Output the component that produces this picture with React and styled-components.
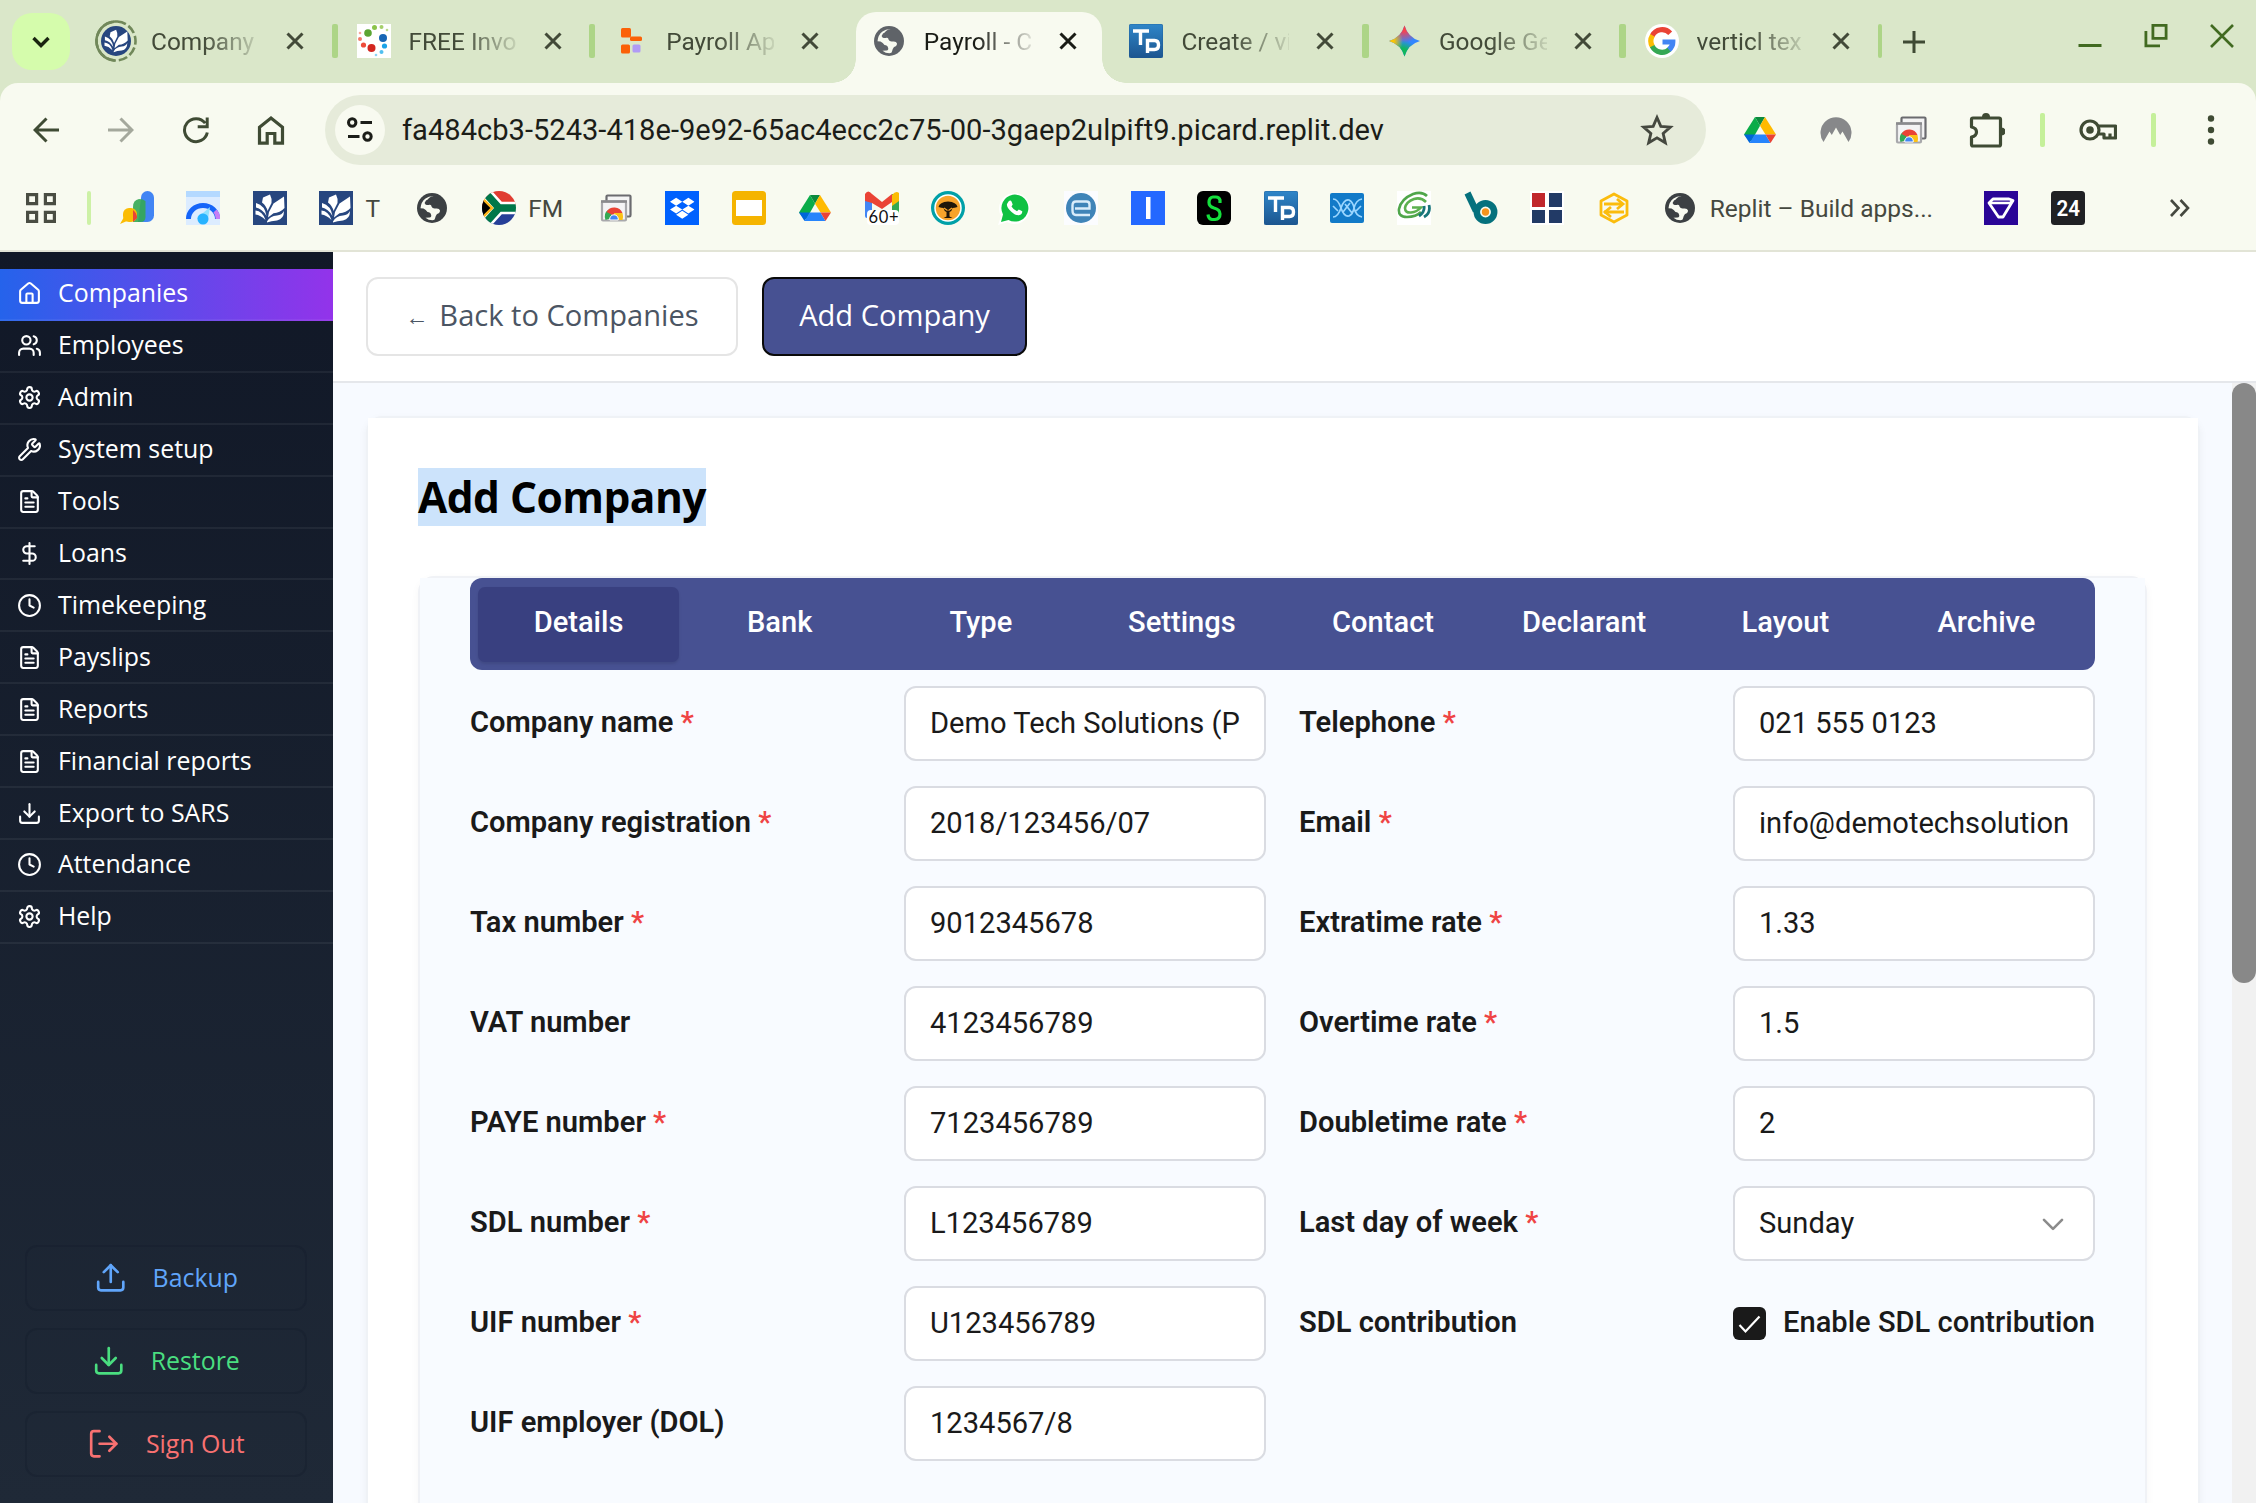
import React from "react";
import styled, { createGlobalStyle, css } from "styled-components";
import {
  House,
  Users,
  Wrench,
  FileText,
  DollarSign,
  Clock,
  Download,
  Upload,
  LogOut,
} from "lucide-react";
import { FaDropbox } from "react-icons/fa";

const GlobalStyle = createGlobalStyle`
  * { box-sizing: border-box; }
  body { margin: 0; overflow: hidden; background: #f8faf0; }
  button { font: inherit; border: 0; background: none; padding: 0; color: inherit; }
`;

const UI = `"Open Sans", "Noto Sans", sans-serif`;
const ROBOTO = `Roboto, "Liberation Sans", sans-serif`;

const Window = styled.div`
  width: 2256px;
  height: 1503px;
  display: flex;
  flex-direction: column;
  overflow: hidden;
  font-family: ${ROBOTO};
`;

/* ---------- tab strip ---------- */

const TabStrip = styled.div`
  height: 83px;
  flex: none;
  display: flex;
  background: #dae7c9;
  padding-left: 12px;
`;

const TabSearch = styled.button`
  width: 58px;
  height: 57px;
  margin: 13px 13px 0 0;
  border-radius: 20px;
  background: #d5fcac;
  display: grid;
  place-items: center;
`;

const Tab = styled.div`
  position: relative;
  width: 246px;
  height: 71px;
  margin-top: 12px;
  padding: 0 17px 13px 16px;
  flex: none;
  display: flex;
  align-items: center;
  color: #424a38;
  ${(p) =>
    p.$active &&
    css`
      background: #f8faf0;
      border-radius: 20px 20px 0 0;
      color: #1a1c16;
      &::before,
      &::after {
        content: "";
        position: absolute;
        bottom: 0;
        width: 24px;
        height: 24px;
      }
      &::before {
        right: 100%;
        background: radial-gradient(circle at 0 0, transparent 23.5px, #f8faf0 24px);
      }
      &::after {
        left: 100%;
        background: radial-gradient(circle at 100% 0, transparent 23.5px, #f8faf0 24px);
      }
    `}
`;

const Favicon = styled.span`
  width: 34px;
  height: 34px;
  flex: none;
  display: grid;
  place-items: center;
`;

const TabTitle = styled.span`
  width: 108px;
  margin: 0 19px 0 18px;
  padding-top: 1.5px;
  font-size: 24.4px;
  line-height: 32px;
  white-space: nowrap;
  overflow: hidden;
  mask-image: linear-gradient(90deg, #000 48%, rgba(0, 0, 0, 0.12) 100%);
`;

const TabClose = styled.button`
  width: 34px;
  height: 34px;
  display: grid;
  place-items: center;
`;

const TabGap = styled.div`
  width: 11.6px;
  height: 83px;
  flex: none;
  display: flex;
  justify-content: center;
  padding-top: 24px;
  &::after {
    content: "";
    width: ${(p) => p.$line || 0}px;
    height: 34px;
    border-radius: 2px;
    background: #add587;
  }
`;

const NewTab = styled.button`
  width: 56px;
  height: 83px;
  display: grid;
  place-items: center;
`;

const WindowControls = styled.div`
  margin-left: auto;
  padding-right: 1px;
  height: 72px;
  display: flex;
  color: #416a20;
  button {
    width: 66px;
    display: grid;
    place-items: center;
  }
`;

/* ---------- toolbar ---------- */

const ToolbarWrap = styled.div`
  height: 98px;
  flex: none;
  background: #dae7c9;
`;

const Toolbar = styled.div`
  height: 98px;
  background: #f8faf0;
  border-radius: 18px 18px 0 0;
  padding: 12px 0 0 8.5px;
  display: flex;
  align-items: flex-start;
  color: #3f4b34;
`;

const ToolButton = styled.button`
  width: ${(p) => p.$w || 75}px;
  height: 70px;
  flex: none;
  display: grid;
  place-items: center;
  color: ${(p) => (p.$dim ? "#a4a89c" : "inherit")};
`;

const ToolDivider = styled.div`
  width: ${(p) => p.$w}px;
  height: 70px;
  display: grid;
  place-items: center;
  &::after {
    content: "";
    width: 5px;
    height: 34px;
    border-radius: 2px;
    background: #c5f09a;
  }
`;

const Omnibox = styled.div`
  width: 1381px;
  height: 70px;
  margin: 0 16.5px;
  padding: 0 31px 0 10px;
  border-radius: 35px;
  background: #e6ebda;
  display: flex;
  align-items: center;
`;

const SiteInfo = styled.span`
  width: 50px;
  height: 50px;
  border-radius: 25px;
  background: #f8faf0;
  display: grid;
  place-items: center;
`;

const Url = styled.span`
  flex: 1;
  margin-left: 17px;
  font-size: 29.1px;
  color: #1b1d18;
  white-space: nowrap;
`;

/* ---------- bookmarks ---------- */

const Bookmarks = styled.div`
  height: 71px;
  flex: none;
  padding: 10px 0 0 20px;
  display: flex;
  align-items: flex-start;
  background: #f8faf0;
  border-bottom: 2px solid #e2e4d6;
  color: #45483f;
  font-size: 24.5px;
`;

const Bookmark = styled.div`
  width: ${(p) => p.$w || 66.54}px;
  height: 34px;
  flex: none;
  display: flex;
  align-items: center;
  gap: 12.5px;
  white-space: nowrap;
  svg { flex: none; }
`;

const BookmarkDivider = styled.div`
  width: 4px;
  height: 34px;
  margin: 0 28.5px 0 25px;
  border-radius: 2px;
  background: #cdf1a6;
`;

/* ---------- application ---------- */

const AppBody = styled.div`
  flex: 1;
  min-height: 0;
  display: flex;
`;

const Sidebar = styled.aside`
  width: 333px;
  flex: none;
  display: flex;
  flex-direction: column;
  padding-top: 17px;
  background: linear-gradient(180deg, #111827 0%, #1f2937 100%);
  color: #fff;
  font-family: ${UI};
  font-size: 24.9px;
`;

const NavItem = styled.a`
  height: 51.92px;
  padding-left: 17px;
  display: flex;
  align-items: center;
  gap: 16px;
  white-space: nowrap;
  border-bottom: 2px solid rgba(255, 255, 255, 0.06);
  background: ${(p) => (p.$active ? "linear-gradient(90deg, #2563eb, #9333ea)" : "none")};
  svg { flex: none; }
  span { padding-bottom: 3px; }
`;

const SidebarFooter = styled.div`
  margin-top: auto;
  padding: 0 26px 26px 25px;
  display: flex;
  flex-direction: column;
  gap: 17px;
`;

const FooterButton = styled.button`
  height: 66px;
  border: 2px solid rgba(17, 24, 39, 0.25);
  border-radius: 12px;
  display: flex;
  align-items: center;
  justify-content: center;
  gap: 25px;
  color: ${(p) => p.$tone};
  span { padding-bottom: 3px; }
`;

const Main = styled.main`
  flex: 1;
  min-width: 0;
  display: flex;
  flex-direction: column;
`;

const ActionBar = styled.div`
  height: 131px;
  flex: none;
  padding: 25px 0 0 33px;
  display: flex;
  gap: 24px;
  background: #fff;
  border-bottom: 2px solid #e5e7eb;
  font-family: ${UI};
  font-size: 29.1px;
  font-weight: 500;
`;

const ActionButton = styled.button`
  width: ${(p) => p.$w}px;
  height: 79px;
  padding-bottom: 3px;
  border-radius: 12px;
  border: 2px solid ${(p) => (p.$primary ? "#0a0a0a" : "#e5e5e5")};
  background: ${(p) => (p.$primary ? "#475192" : "#fff")};
  color: ${(p) => (p.$primary ? "#fff" : "#4b5563")};
  display: flex;
  align-items: center;
  justify-content: center;
  gap: 11px;
  white-space: nowrap;
`;

const BackArrow = styled.span`
  padding-top: 4px;
  font-family: "Liberation Sans", sans-serif;
  font-size: 23px;
`;

const Scroller = styled.div`
  flex: 1;
  min-height: 0;
  display: flex;
  background: #f7faff;
`;

const Canvas = styled.div`
  flex: 1;
  padding: 33px 32px 0 33px;
`;

const Frame = styled.section`
  height: 1200px;
  border: 2px solid #eff2f6;
  border-radius: 16px;
  box-shadow: 0 3px 8px rgba(0, 0, 0, 0.05);
`;

const Page = styled.div`
  height: 100%;
  padding: 50px 51px 0 50px;
  background: #fff;
`;

const Title = styled.h1`
  margin: 0 0 50px;
  font-family: ${UI};
  font-size: 42.5px;
  line-height: 58px;
  font-weight: 700;
  letter-spacing: -0.55px;
  color: #000;
  span {
    display: inline-block;
    margin-top: -1px;
    background: #cce3fb;
  }
`;

const Panel = styled.div`
  height: 1000px;
  border: 2px solid #f0f2f6;
  border-radius: 16px;
  box-shadow: 0 3px 8px rgba(0, 0, 0, 0.04);
`;

const PanelBody = styled.div`
  height: 100%;
  padding: 0 50px;
  background: #f8fbff;
`;

const FormTabs = styled.nav`
  height: 92px;
  padding: 8.5px 8px;
  display: grid;
  grid-template-columns: repeat(8, 1fr);
  border-radius: 12px;
  background: #475192;
`;

const FormTab = styled.button`
  padding-bottom: 5px;
  border-radius: 7px;
  font-size: 29.1px;
  font-weight: 500;
  color: #fff;
  background: ${(p) => (p.$active ? "#394080" : "none")};
  box-shadow: ${(p) => (p.$active ? "0 2px 3px rgba(0, 0, 0, 0.1)" : "none")};
`;

const Form = styled.div`
  display: grid;
  grid-template-columns: 1fr 1fr;
  column-gap: 33px;
  padding-top: 16px;
`;

const Column = styled.div`
  display: flex;
  flex-direction: column;
  gap: 25px;
`;

const Field = styled.div`
  height: 75px;
  display: grid;
  grid-template-columns: 1fr 362px;
  align-items: center;
`;

const Label = styled.label`
  padding-bottom: 4px;
  font-size: 29.1px;
  font-weight: 600;
  color: #1a1a1a;
  white-space: nowrap;
  i {
    font-style: normal;
    color: #ef4444;
  }
`;

const Control = styled.div`
  height: 75px;
  padding: 0 24px 2px;
  display: flex;
  align-items: center;
  justify-content: space-between;
  border: 2px solid #dadce2;
  border-radius: 12px;
  background: #fff;
  color: #1a1a1a;
  font-size: 29.1px;
  white-space: nowrap;
  overflow: hidden;
  svg { margin: 3px 5px 0 0; }
`;

const CheckRow = styled.div`
  display: flex;
  align-items: center;
  gap: 17px;
  font-size: 29.1px;
  font-weight: 500;
  color: #1a1a1a;
  white-space: nowrap;
  span { padding-bottom: 4px; }
`;

const CheckBox = styled.div`
  width: 33px;
  height: 33px;
  flex: none;
  border-radius: 6px;
  background: #1a1a1a;
  display: grid;
  place-items: center;
`;

const ScrollTrack = styled.div`
  width: 24px;
  background: #f1f1f1;
`;

const ScrollThumb = styled.div`
  height: 600px;
  border-radius: 12px;
  background: #888;
`;

/* ---------- drawings ---------- */

const Svg = ({ s = 34, vb = 34, children, ...rest }) => (
  <svg width={s} height={s} viewBox={`0 0 ${vb} ${vb}`} fill="none" {...rest}>
    {children}
  </svg>
);

const Gear = () => (
  <svg width="25" height="25" viewBox="0 0 24 24" fill="none" stroke="currentColor" strokeWidth="2" strokeLinecap="round" strokeLinejoin="round">
    <path d="M12.22 2h-.44a2 2 0 0 0-2 2v.18a2 2 0 0 1-1 1.73l-.43.25a2 2 0 0 1-2 0l-.15-.08a2 2 0 0 0-2.73.73l-.22.38a2 2 0 0 0 .73 2.73l.15.1a2 2 0 0 1 1 1.72v.51a2 2 0 0 1-1 1.74l-.15.09a2 2 0 0 0-.73 2.73l.22.38a2 2 0 0 0 2.73.73l.15-.08a2 2 0 0 1 2 0l.43.25a2 2 0 0 1 1 1.73V20a2 2 0 0 0 2 2h.44a2 2 0 0 0 2-2v-.18a2 2 0 0 1 1-1.73l.43-.25a2 2 0 0 1 2 0l.15.08a2 2 0 0 0 2.73-.73l.22-.39a2 2 0 0 0-.73-2.73l-.15-.08a2 2 0 0 1-1-1.74v-.5a2 2 0 0 1 1-1.74l.15-.09a2 2 0 0 0 .73-2.73l-.22-.38a2 2 0 0 0-2.73-.73l-.15.08a2 2 0 0 1-2 0l-.43-.25a2 2 0 0 1-1-1.73V4a2 2 0 0 0-2-2z" />
    <circle cx="12" cy="12" r="3" />
  </svg>
);

const CloseX = () => (
  <Svg s={18} vb={18} stroke="currentColor" strokeWidth="3">
    <path d="M1.5 1.5l15 15M16.5 1.5l-15 15" />
  </Svg>
);

const Leaves = () => (
  <g fill="#fff">
    <path d="M10 6.500L17 3.500Q19.300 8 18.500 12L14.500 20Q13.500 15 9 11.500z" />
    <path d="M16 21L20.500 12.500 31 5.500 31.500 17Q27 22 20.500 22.300L15 26.500z" />
    <path d="M3 12Q12 14.500 13.500 25 9 17.500 3 16.500z" />
    <path d="M2.500 19.500Q9.500 20 12.500 29 7.500 24 2.500 23.500z" />
    <path d="M14 30.500Q17 25 24 24.500 29 24 31 20 31 28 24 29.500 18 30 14 31.500z" />
  </g>
);

const BookIcon = () => (
  <Svg>
    <rect width="34" height="34" fill="#27467f" />
    <Leaves />
  </Svg>
);

const LoadingBook = () => (
  <Svg s={42} vb={42} style={{ margin: -4 }}>
    <circle cx="21" cy="21" r="19.500" stroke="#71885a" strokeWidth="2.600" strokeDasharray="9 3" pathLength="122.5" transform="rotate(-86 21 21)" />
    <path d="M19 1.600A19.500 19.500 0 0 0 19 40.400" stroke="#71885a" strokeWidth="2.600" strokeLinecap="round" />
    <circle cx="21" cy="21" r="15" fill="#27467f" />
    <g transform="translate(7.500 7) scale(.8)"><Leaves /></g>
  </Svg>
);

const DotsIcon = () => (
  <Svg>
    <rect width="34" height="34" fill="#fff" />
    <circle cx="11" cy="9" r="3.800" fill="#5ba533" />
    <circle cx="26" cy="14" r="4" fill="#1766b5" />
    <circle cx="14.500" cy="24" r="4" fill="#d3261f" />
    <circle cx="17.500" cy="3.500" r="2.500" fill="#8bc34a" />
    <circle cx="24.500" cy="3" r="2" fill="#a5cf6b" />
    <circle cx="30" cy="6" r="1.300" fill="#b9d98b" />
    <circle cx="27.500" cy="22" r="2.600" fill="#1ba3e8" />
    <circle cx="24.500" cy="28" r="2" fill="#50bff0" />
    <circle cx="19" cy="31" r="1.300" fill="#8bd4f5" />
    <circle cx="6.500" cy="21" r="2.600" fill="#ee4b3a" />
    <circle cx="3" cy="15" r="2" fill="#f47a68" />
    <circle cx="3" cy="9" r="1.300" fill="#f8a89b" />
  </Svg>
);

const ReplitIcon = () => (
  <Svg>
    <rect x="7" y="4" width="10" height="9.500" rx="1.500" fill="#fb6107" />
    <rect x="16" y="12.500" width="12" height="4.500" rx="1.500" fill="#fb6107" />
    <rect x="7" y="20.500" width="9" height="9" rx="1.500" fill="#fb6107" />
    <rect x="18.500" y="20.500" width="8" height="8" rx="1.500" fill="#b09bf5" />
  </Svg>
);

const GlobeIcon = ({ color = "#3c4043" }) => (
  <Svg>
    <circle cx="17" cy="17" r="15" fill={color} />
    <path d="M18.500 5q-3 .5-4.500 2-1 1.500-3 2.500-2 2-.5 4 2 1 4 .3 2-.3 2 1.700 1 2.500 4 2 4-.5 4.500 2 0 2.500-3 3.500-1.500 1.500-2 4.500 0 1.800-2.500 1.800-4 0-7-2.500l4-.3q2.500-.5 1.500-3-.5-2.500-3.500-2.500-1.500-2.500-4-3.500l-3-.2q.5-6.500 5-9.800 3.500-2.700 8-2.500z" fill="#f8faf0" />
  </Svg>
);

const TpIcon = () => (
  <Svg>
    <defs>
      <linearGradient id="tp" x1="0" y1="0" x2="0" y2="1">
        <stop stopColor="#2f86c9" />
        <stop offset="1" stopColor="#1c558f" />
      </linearGradient>
    </defs>
    <rect width="34" height="34" rx="2.500" fill="url(#tp)" stroke="#1d5c96" strokeWidth=".6" />
    <path d="M4 7h16M11.500 7v14M18.500 29V16.500h7q4 0 4 4.500t-4 4.500h-6" stroke="#fff" strokeWidth="3.400" />
  </Svg>
);

const GeminiIcon = () => (
  <Svg>
    <defs>
      <radialGradient id="gr" cx="17" cy="2" r="17" gradientUnits="userSpaceOnUse"><stop stopColor="#f8423f" /><stop offset=".3" stopColor="#f8424f" /><stop offset="1" stopColor="#f8424f" stopOpacity="0" /></radialGradient>
      <radialGradient id="gy" cx="1" cy="17" r="15" gradientUnits="userSpaceOnUse"><stop stopColor="#fcc502" /><stop offset=".4" stopColor="#fcc502" /><stop offset="1" stopColor="#fcc502" stopOpacity="0" /></radialGradient>
      <radialGradient id="gg" cx="15" cy="33" r="17" gradientUnits="userSpaceOnUse"><stop stopColor="#10b75b" /><stop offset=".5" stopColor="#10b75b" /><stop offset="1" stopColor="#10b75b" stopOpacity="0" /></radialGradient>
    </defs>
    {["#3186ff", "url(#gr)", "url(#gg)", "url(#gy)"].map((f) => (
      <path key={f} d="M17.500 1.500q3.300 12 15.500 15.500-12.200 3.500-15.500 15.500Q14.200 20.500 2 17 14.200 13.500 17.500 1.500z" fill={f} />
    ))}
  </Svg>
);

const GoogleIcon = () => (
  <Svg>
    <circle cx="17" cy="17" r="17" fill="#fff" />
    <g strokeWidth="5.200">
      <path d="M25.200 9.200A11 11 0 0 0 7.200 11.800" stroke="#ea4335" />
      <path d="M7.500 11.300a11 11 0 0 0 0 11.400" stroke="#fbbc04" />
      <path d="M7.200 22.200a11 11 0 0 0 17.300 3.200" stroke="#34a853" />
      <path d="M24 25.800q3.800-3.300 3.800-7.800H17.500" stroke="#4285f4" />
    </g>
  </Svg>
);

const DriveIcon = () => (
  <Svg>
    <path d="M12 4h10l-5 8.700z" fill="#0c8a3e" />
    <path d="M12 4l5 8.700-8.500 15.300h-2L1 21.500z" fill="#0aac49" />
    <path d="M22 4l11 17.500H22.500L17 12.700z" fill="#ffba00" />
    <path d="M11.500 21.500h11l5 8.500h-21z" fill="#2684fc" />
    <path d="M1 21.500h10.500L6.500 30z" fill="#0066da" />
    <path d="M22.500 21.500H33L27.500 30z" fill="#ea4335" />
  </Svg>
);

const ChromeWindows = () => (
  <Svg>
    <path d="M7.500 10V5.500q0-1 1-1h22q1 0 1 1V24q0 1.500-1 1.500h-3" stroke="#6b6b6f" strokeWidth="2.200" fill="#f4f4f4" />
    <rect x="3" y="10.500" width="24" height="19" rx="1" fill="#f4f4f5" stroke="#a8a8ab" strokeWidth="2.200" />
    <path d="M2 10.500h26" stroke="#8a8a8d" strokeWidth="2.600" />
    <path d="M6.500 29a9 9 0 0 1 3-10.500l5 8z" fill="#34a853" />
    <path d="M7.500 21a9 9 0 0 1 16 1l-9 2.500z" fill="#ea4335" />
    <path d="M15 22h8.500q1 3.500 0 7H15z" fill="#fbc116" />
    <path d="M10.800 29a4.300 4.300 0 1 1 8.400 0z" fill="#4285f4" stroke="#fff" strokeWidth="1" />
  </Svg>
);

const AdsIcon = () => (
  <Svg>
    <rect x="21" y="0" width="13" height="31" rx="6.500" fill="#4285f4" />
    <path d="M21 7l-3 24h9z" fill="#4285f4" />
    <path d="M13 31V16q0-7 6-8 4 0 6.500 2v16q0 5-5 5z" fill="#34a853" opacity=".9" />
    <rect x="3" y="17" width="14" height="14" rx="6" fill="#fbbc04" />
    <path d="M13 19q4 3 4 8l-4 4z" fill="#ea4335" />
    <path d="M0 33l4-7 3 4z" fill="#fbbc04" />
  </Svg>
);

const WifiIcon = () => (
  <Svg>
    <rect width="34" height="34" fill="#dcecff" />
    <rect width="34" height="6" fill="#b4d9ff" />
    <path d="M2.500 28A14.500 13.500 0 0 1 31.500 28" stroke="#1565f9" strokeWidth="5" />
    <path d="M29 20q3 3 3 8" stroke="#c77df5" strokeWidth="4.500" />
    <path d="M11 28q1-5 6-6l7-6-2 12z" fill="#8fe1ff" />
    <circle cx="17" cy="28" r="5.500" fill="#27b3ff" />
  </Svg>
);

const FlagIcon = () => (
  <Svg>
    <defs><clipPath id="flag"><circle cx="17" cy="17" r="17" /></clipPath></defs>
    <g clipPath="url(#flag)">
      <rect width="34" height="17" fill="#e03c31" />
      <rect y="17" width="34" height="17" fill="#263f98" />
      <path d="M-2-4l19 21h20M-2 38l19-21" stroke="#fff" strokeWidth="12.500" />
      <path d="M-2-4l19 21h20M-2 38l19-21" stroke="#007749" strokeWidth="7.500" />
      <path d="M-2 5l12 12-12 12z" fill="#000" stroke="#ffb81c" strokeWidth="2.400" />
    </g>
  </Svg>
);

const DropboxIcon = () => (
  <Svg>
    <rect width="34" height="34" fill="#0061fe" />
    <FaDropbox x="5" y="5" width="24" height="24" color="#fff" />
  </Svg>
);

const SlidesIcon = () => (
  <Svg>
    <rect y="0" width="34" height="34" rx="3.500" fill="#f5b400" />
    <rect x="4" y="9" width="26" height="16" fill="#fff" />
  </Svg>
);

const GmailIcon = () => (
  <Svg>
    <path d="M0 3h7v24H2q-2 0-2-2z" fill="#4285f4" />
    <path d="M27 3h7v22q0 2-2 2h-5z" fill="#34a853" />
    <path d="M27 4q4-5 7-2v8l-7 5z" fill="#fbbc04" />
    <path d="M0 10V3q3-5 7 0l10 8 10-8v8L17 18 7 12z" fill="#ea4335" />
    <rect x="2" y="19" width="32" height="15" rx="4" fill="#fff" />
    <text x="3.500" y="32" fontFamily="Lato, sans-serif" fontSize="16.500" textLength="30" fill="#111">60+</text>
  </Svg>
);

const TreeIcon = () => (
  <Svg>
    <circle cx="17" cy="17" r="17" fill="#00a0a8" />
    <circle cx="17" cy="17" r="13" fill="#f7a32b" stroke="#fff" strokeWidth="1.500" />
    <path d="M7.500 16q1-5 9.500-5.500 8.500.5 9.500 5.500-3 1-5 1-.5 3-3 4v4.500l3 1.500h-9l3-1.500V21q-2.500-1-3-4-2 0-5-1z" fill="#20160a" />
    <path d="M13 17l3.500 2.500M21 17l-3.500 2.500" stroke="#f7a32b" strokeWidth="1.200" />
  </Svg>
);

const WhatsIcon = () => (
  <Svg>
    <path d="M0 34l3-9A15.500 15.500 0 1 1 9 31z" fill="#fff" />
    <path d="M3 31l2-7.500A13.500 13.500 0 1 1 10.500 29z" fill="#0fc143" />
    <path d="M10.500 10.500q2-2 3 0l1.200 3-1.200 2q2 3.500 5.500 4.700l1.800-1.700 3.500 1.700q0 3.500-3.500 4-3 .5-7.500-3.500-5-4.500-4.300-7.700z" fill="#fff" />
  </Svg>
);

const EIcon = () => (
  <Svg>
    <rect width="34" height="34" fill="#fbfcff" />
    <circle cx="17" cy="17" r="15" fill="#3f84b8" />
    <path d="M11 17.500h14.500V13.500q0-3-3-3H12q-3.500 0-3.500 4v5q0 4.500 3.500 4.500h14" stroke="#d9ecfa" strokeWidth="2.400" />
  </Svg>
);

const BarIcon = () => (
  <Svg>
    <rect width="34" height="34" fill="#2468ff" />
    <rect x="15" y="6" width="4.500" height="22" fill="#fff" />
  </Svg>
);

const SIcon = () => (
  <Svg>
    <rect width="34" height="34" rx="6" fill="#000" />
    <path d="M23 12V9q-1-3-4-3h-3q-4 .5-4 5.500 0 4 5 5.500 6 1.500 6 6 0 5-5 5.500h-3q-3.500-.5-4-5" stroke="#14e03c" strokeWidth="3.200" />
  </Svg>
);

const DnaIcon = () => (
  <Svg>
    <rect y="2" width="34" height="30" rx="2" fill="#127ac8" />
    <path d="M3 8q5 0 8 9 3 9 8 8 4-2 5-8 2-8 8-9M3 26q5 0 8-9 3-9 8-8 4 2 5 8 2 8 8 9M15 13l7 9M20 12l-7 9M3 15l5 5M31 15l-5 5" stroke="#9bd6ff" strokeWidth="1.700" />
  </Svg>
);

const SwirlIcon = () => (
  <Svg>
    <rect width="34" height="34" fill="#fff" />
    <path d="M30 5Q25 0 16 3 4 8 2 18 1 26 10 26q9 0 14-5" stroke="#4fa64a" strokeWidth="2.600" />
    <path d="M29 11Q24 6 17 8 9 11 8 17q0 5 6 4.500 6-.5 10-5H15" stroke="#5cb04f" strokeWidth="2.600" />
    <path d="M27 15q1 6-5 10M32 14q2 8-5 12" stroke="#18757a" strokeWidth="2.800" />
  </Svg>
);

const BIcon = () => (
  <Svg>
    <circle cx="21.500" cy="21" r="8.700" stroke="#05717d" strokeWidth="6.500" />
    <path d="M3.500 2l8.500 18" stroke="#05717d" strokeWidth="6.500" />
    <circle cx="21.500" cy="21" r="3.700" fill="#f7941d" />
  </Svg>
);

const SquaresIcon = () => (
  <Svg>
    <rect width="34" height="34" fill="#fff" />
    <rect x="2" y="2" width="13" height="14" fill="#c1272d" />
    <rect x="19" y="2" width="13" height="14" fill="#223a66" />
    <rect x="2" y="19" width="13" height="13" fill="#223a66" />
    <rect x="19" y="19" width="13" height="13" fill="#223a66" />
  </Svg>
);

const HexIcon = () => (
  <Svg stroke="#fbbc0d">
    <path d="M17 3l13 7v14l-13 7-13-7V10z" strokeWidth="2.800" strokeLinejoin="round" />
    <path d="M7 13h18M7 21h20" strokeWidth="3" />
    <path d="M20 8l6 5-6 5M14 16l-6 5 6 5" strokeWidth="2.800" />
  </Svg>
);

const TriIcon = () => (
  <Svg>
    <rect width="34" height="34" fill="#2a0597" />
    <path d="M5 12l4-4h16l4 1.500L19 26h-4.500z" stroke="#fff" strokeWidth="2.800" strokeLinejoin="round" />
    <path d="M5 12l21 0 3-2.500" stroke="#fff" strokeWidth="2.600" />
  </Svg>
);

const TwentyFourIcon = () => (
  <Svg>
    <rect width="34" height="34" rx="3.500" fill="#202124" />
    <text x="5.500" y="25" fontFamily="Roboto, sans-serif" fontWeight="600" fontSize="22" textLength="23.500" fill="#fff" lengthAdjust="spacingAndGlyphs">24</text>
  </Svg>
);

const NordIcon = () => (
  <Svg>
    <path d="M4.500 29A15.500 15.500 0 1 1 29.500 29l-6-10.500-2.300 3.500L17 14.500 12.800 22l-2.300-3.500z" fill="#87888a" />
  </Svg>
);

/* ---------- data ---------- */

const tabs = [
  { title: "Company", icon: <LoadingBook />, line: 6 },
  { title: "FREE Invo", icon: <DotsIcon />, line: 6 },
  { title: "Payroll Ap", icon: <ReplitIcon />, line: 0 },
  { title: "Payroll - C", icon: <GlobeIcon color="#5f6368" />, line: 0, active: true },
  { title: "Create / vi", icon: <TpIcon />, line: 7 },
  { title: "Google Ge", icon: <GeminiIcon />, line: 7 },
  { title: "verticl tex", icon: <GoogleIcon />, line: 4 },
];

const bookmarks = [
  [<AdsIcon />],
  [<WifiIcon />],
  [<BookIcon />],
  [<BookIcon />, "T", 96],
  [<GlobeIcon />],
  [<FlagIcon />, "FM", 117],
  [<ChromeWindows />],
  [<DropboxIcon />],
  [<SlidesIcon />],
  [<DriveIcon />],
  [<GmailIcon />],
  [<TreeIcon />],
  [<WhatsIcon />],
  [<EIcon />],
  [<BarIcon />],
  [<SIcon />],
  [<TpIcon />],
  [<DnaIcon />],
  [<SwirlIcon />],
  [<BIcon />],
  [<SquaresIcon />],
  [<HexIcon />],
  [<GlobeIcon />, "Replit – Build apps...", 321],
  [<TriIcon />],
  [<TwentyFourIcon />, null, 112],
];

const nav = [
  ["Companies", House],
  ["Employees", Users],
  ["Admin", Gear],
  ["System setup", Wrench],
  ["Tools", FileText],
  ["Loans", DollarSign],
  ["Timekeeping", Clock],
  ["Payslips", FileText],
  ["Reports", FileText],
  ["Financial reports", FileText],
  ["Export to SARS", Download],
  ["Attendance", Clock],
  ["Help", Gear],
];

const footer = [
  ["Backup", Upload, "#60a5fa"],
  ["Restore", Download, "#4ade80"],
  ["Sign Out", LogOut, "#f87171"],
];

const formTabs = ["Details", "Bank", "Type", "Settings", "Contact", "Declarant", "Layout", "Archive"];

const left = [
  ["Company name", true, "Demo Tech Solutions (P"],
  ["Company registration", true, "2018/123456/07"],
  ["Tax number", true, "9012345678"],
  ["VAT number", false, "4123456789"],
  ["PAYE number", true, "7123456789"],
  ["SDL number", true, "L123456789"],
  ["UIF number", true, "U123456789"],
  ["UIF employer (DOL)", false, "1234567/8"],
];

const right = [
  ["Telephone", true, "021 555 0123"],
  ["Email", true, "info@demotechsolution"],
  ["Extratime rate", true, "1.33"],
  ["Overtime rate", true, "1.5"],
  ["Doubletime rate", true, "2"],
  ["Last day of week", true, "Sunday", "select"],
  ["SDL contribution", false, "Enable SDL contribution", "check"],
];

const FieldRow = ({ label, required, value, kind }) => (
  <Field>
    <Label>
      {label} {required && <i>*</i>}
    </Label>
    {kind === "check" ? (
      <CheckRow>
        <CheckBox>
          <Svg s={23} vb={23} stroke="#fff" strokeWidth="2.200">
            <path d="M1.500 13l6 6.500L21.500 4.500" />
          </Svg>
        </CheckBox>
        <span>{value}</span>
      </CheckRow>
    ) : (
      <Control>
        <span>{value}</span>
        {kind === "select" && (
          <svg width="22" height="13" viewBox="0 0 22 13" fill="none" stroke="#8b8b8b" strokeWidth="2.600" strokeLinecap="round" strokeLinejoin="round">
            <path d="M2 1.800l9 9 9-9" />
          </svg>
        )}
      </Control>
    )}
  </Field>
);

export default function App() {
  return (
    <Window>
      <GlobalStyle />
      <TabStrip>
        <TabSearch>
          <Svg s={20} vb={20} stroke="#1a2410" strokeWidth="3.400">
            <path d="M2.500 6l7.500 7.500L17.500 6" />
          </Svg>
        </TabSearch>
        {tabs.map((t) => (
          <React.Fragment key={t.title}>
            <Tab $active={t.active}>
              <Favicon>{t.icon}</Favicon>
              <TabTitle>{t.title}</TabTitle>
              <TabClose><CloseX /></TabClose>
            </Tab>
            <TabGap $line={t.line} />
          </React.Fragment>
        ))}
        <NewTab>
          <Svg s={22} vb={22} stroke="#3f4b34" strokeWidth="3"><path d="M11 0v22M0 11h22" /></Svg>
        </NewTab>
        <WindowControls>
          <button><Svg s={24} vb={24} stroke="currentColor" strokeWidth="3"><path d="M.5 21.500h23" /></Svg></button>
          <button>
            <Svg s={24} vb={24} stroke="currentColor" strokeWidth="2.800">
              <path d="M8.900 1.400h13.200v13H8.900zM1.900 7v14.900H16" />
            </Svg>
          </button>
          <button><Svg s={24} vb={24} stroke="currentColor" strokeWidth="2.600"><path d="M1 1l22 22M23 1L1 23" /></Svg></button>
        </WindowControls>
      </TabStrip>

      <ToolbarWrap>
        <Toolbar>
          <ToolButton>
            <Svg s={26} vb={26} stroke="currentColor" strokeWidth="3"><path d="M26 13H2.500M13.500 1.500L2 13l11.500 11.500" /></Svg>
          </ToolButton>
          <ToolButton $dim>
            <Svg s={26} vb={26} stroke="currentColor" strokeWidth="3"><path d="M0 13h23.500M12.500 1.500L24 13 12.500 24.500" /></Svg>
          </ToolButton>
          <ToolButton>
            <Svg s={28} vb={28} stroke="currentColor" strokeWidth="3">
              <path d="M23.200 7.200A11.500 11.500 0 1 0 25.300 16.500M25.200 1.500v9.200h-9.500" />
            </Svg>
          </ToolButton>
          <ToolButton>
            <Svg s={30} vb={30} stroke="currentColor" strokeWidth="3.200">
              <path d="M3.500 12.200L15 3l11.500 9.200V28.200h-7.700V18.500h-7.600v9.700H3.500z" />
            </Svg>
          </ToolButton>
          <Omnibox>
            <SiteInfo>
              <Svg s={26} vb={26} stroke="#1b1d18" strokeWidth="3">
                <circle cx="5.200" cy="5.500" r="3.700" /><path d="M13.500 5.500H25M1 19.500h11.500" /><circle cx="20.500" cy="19.500" r="3.700" />
              </Svg>
            </SiteInfo>
            <Url>fa484cb3-5243-418e-9e92-65ac4ecc2c75-00-3gaep2ulpift9.picard.replit.dev</Url>
            <Svg s={36} vb={24} stroke="#45483f" strokeWidth="1.900">
              <path d="M12 3.700l2.550 5.850 6.350.55-4.800 4.200 1.450 6.200L12 17.200l-5.550 3.300 1.450-6.200-4.800-4.200 6.350-.55z" />
            </Svg>
          </Omnibox>
          <ToolButton $w={75.5}><DriveIcon /></ToolButton>
          <ToolButton $w={75.5}><NordIcon /></ToolButton>
          <ToolButton $w={75.5}><ChromeWindows /></ToolButton>
          <ToolButton $w={75.5}>
            <Svg s={36} vb={36} stroke="currentColor" strokeWidth="3.200" strokeLinejoin="round">
              <path d="M4 6h26q1.500 0 1.500 1.500v25q0 1.500-1.500 1.500H4q-1.500 0-1.500-1.500V25q5-1 5-5t-5-5V7.500Q2.500 6 4 6z" />
              <path d="M13 5a4 4 0 0 1 8 0zM32.500 15.500a4 4 0 0 1 0 8z" fill="currentColor" stroke="none" />
            </Svg>
          </ToolButton>
          <ToolDivider $w={35} />
          <ToolButton $w={77}>
            <Svg s={38} vb={38} stroke="currentColor" strokeWidth="3.200" strokeLinejoin="round">
              <path d="M19 15h17.500v12h-6M19 23h6v4h6v-4.500" />
              <circle cx="11" cy="19" r="9" />
              <circle cx="11" cy="19" r="3.800" fill="currentColor" stroke="none" />
            </Svg>
          </ToolButton>
          <ToolDivider $w={34} />
          <ToolButton $w={81}>
            <Svg s={34} vb={34}>
              <circle cx="17" cy="5.500" r="3.200" fill="currentColor" /><circle cx="17" cy="17" r="3.200" fill="currentColor" /><circle cx="17" cy="28.500" r="3.200" fill="currentColor" />
            </Svg>
          </ToolButton>
        </Toolbar>
      </ToolbarWrap>

      <Bookmarks>
        <svg width="42" height="34" viewBox="0 4 42 34" fill="none" stroke="#4a4d43" strokeWidth="3.200">
          <path d="M7.600 7.600h9v9h-9zM25.400 7.600h9v9h-9zM7.600 25.400h9v9h-9zM25.400 25.400h9v9h-9z" />
        </svg>
        <BookmarkDivider />
        {bookmarks.map(([icon, text, w], i) => (
          <Bookmark key={i} $w={w}>
            {icon}
            {text}
          </Bookmark>
        ))}
        <Svg s={34} vb={34} stroke="#45483f" strokeWidth="2.600">
          <path d="M8 9l7.500 8L8 25M17.500 9l7.500 8-7.500 8" />
        </Svg>
      </Bookmarks>

      <AppBody>
        <Sidebar>
          {nav.map(([name, Icon], i) => (
            <NavItem key={name} $active={i === 0}>
              <Icon size={25} />
              <span>{name}</span>
            </NavItem>
          ))}
          <SidebarFooter>
            {footer.map(([name, Icon, tone]) => (
              <FooterButton key={name} $tone={tone}>
                <Icon size={33.5} strokeWidth={1.9} />
                <span>{name}</span>
              </FooterButton>
            ))}
          </SidebarFooter>
        </Sidebar>
        <Main>
          <ActionBar>
            <ActionButton $w={372}><BackArrow>←</BackArrow>Back to Companies</ActionButton>
            <ActionButton $w={265} $primary>Add Company</ActionButton>
          </ActionBar>
          <Scroller>
            <Canvas>
              <Frame>
                <Page>
                  <Title><span>Add Company</span></Title>
                  <Panel>
                    <PanelBody>
                      <FormTabs>
                        {formTabs.map((t, i) => <FormTab key={t} $active={i === 0}>{t}</FormTab>)}
                      </FormTabs>
                      <Form>
                        {[left, right].map((rows, c) => (
                          <Column key={c}>
                            {rows.map(([label, required, value, kind]) => (
                              <FieldRow key={label} label={label} required={required} value={value} kind={kind} />
                            ))}
                          </Column>
                        ))}
                      </Form>
                    </PanelBody>
                  </Panel>
                </Page>
              </Frame>
            </Canvas>
            <ScrollTrack><ScrollThumb /></ScrollTrack>
          </Scroller>
        </Main>
      </AppBody>
    </Window>
  );
}
